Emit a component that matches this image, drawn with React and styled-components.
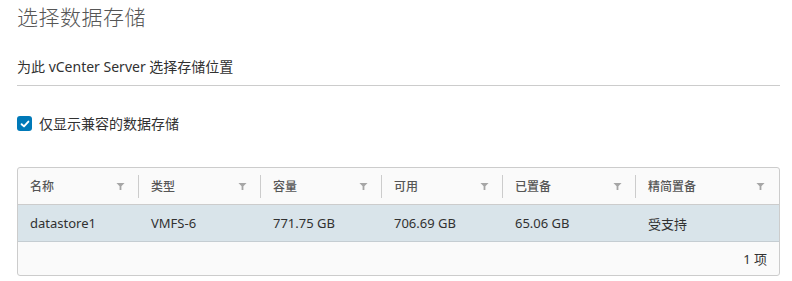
import React from "react";
import styled, { createGlobalStyle } from "styled-components";

const GlobalStyle = createGlobalStyle`
  html, body {
    margin: 0;
    padding: 0;
    background: #ffffff;
  }
  body {
    font-family: "Noto Sans", "Noto Sans CJK SC", sans-serif;
    color: #565656;
  }
`;

const columns = [
  { key: "name", label: "名称", width: 121 },
  { key: "type", label: "类型", width: 122 },
  { key: "capacity", label: "容量", width: 121 },
  { key: "free", label: "可用", width: 121 },
  { key: "provisioned", label: "已置备", width: 133 },
  { key: "thin", label: "精简置备" },
];

const rows = [
  {
    name: "datastore1",
    type: "VMFS-6",
    capacity: "771.75 GB",
    free: "706.69 GB",
    provisioned: "65.06 GB",
    thin: "受支持",
  },
];

function FilterIcon() {
  return (
    <svg width="9" height="9" viewBox="0 0 10 10">
      <path d="M0.5 1 H9.5 L6 4.8 V9 H4 V4.8 Z" fill="#a6a6a6" />
    </svg>
  );
}

function CheckIcon() {
  return (
    <svg width="10" height="10" viewBox="0 0 10 10">
      <path
        d="M1.6 5.2 L4 7.4 L8.4 2.6"
        fill="none"
        stroke="#ffffff"
        strokeWidth="1.9"
        strokeLinecap="round"
        strokeLinejoin="round"
      />
    </svg>
  );
}

export default function App() {
  return (
    <Page>
      <GlobalStyle />
      <Title>选择数据存储</Title>
      <Subtitle>为此 vCenter Server 选择存储位置</Subtitle>
      <Divider />
      <CheckRow>
        <CheckBox>
          <CheckIcon />
        </CheckBox>
        <CheckLabel>仅显示兼容的数据存储</CheckLabel>
      </CheckRow>
      <Grid>
        <HeaderRow>
          {columns.map((col, i) => (
            <HeaderCell key={col.key} $width={col.width}>
              <HeaderLabel>{col.label}</HeaderLabel>
              <FilterIcon />
              {i < columns.length - 1 && <Separator />}
            </HeaderCell>
          ))}
        </HeaderRow>
        {rows.map((row) => (
          <DataRow key={row.name} $selected>
            {columns.map((col) => (
              <DataCell key={col.key} $width={col.width}>
                {row[col.key]}
              </DataCell>
            ))}
          </DataRow>
        ))}
        <Footer>1 项</Footer>
      </Grid>
    </Page>
  );
}

const Page = styled.div`
  padding: 0 12px 0 17px;
  width: 763px;
`;

const Title = styled.h2`
  margin: 0;
  padding-top: 2px;
  font-size: 21px;
  line-height: 30px;
  font-weight: 300;
  color: #565656;
  letter-spacing: 0.5px;
`;

const Subtitle = styled.p`
  margin: 25px 0 0;
  font-size: 14px;
  line-height: 19px;
  color: #313131;
`;

const Divider = styled.hr`
  margin: 9px 0 0;
  border: none;
  border-top: 1px solid #cccccc;
`;

const CheckRow = styled.div`
  display: flex;
  align-items: center;
  gap: 7px;
  margin-top: 28px;
`;

const CheckBox = styled.span`
  display: flex;
  align-items: center;
  justify-content: center;
  width: 15px;
  height: 15px;
  border-radius: 3px;
  background: #0079b8;
`;

const CheckLabel = styled.span`
  font-size: 14px;
  line-height: 19px;
  color: #313131;
`;

const Grid = styled.div`
  margin-top: 34px;
  border: 1px solid #cccccc;
  border-radius: 3px;
  background: #fafafa;
  overflow: hidden;
`;

const HeaderRow = styled.div`
  display: flex;
  height: 36px;
  border-bottom: 1px solid #cccccc;
`;

const HeaderCell = styled.div`
  position: relative;
  box-sizing: border-box;
  display: flex;
  align-items: center;
  justify-content: space-between;
  padding: 0 14px 0 12px;
  flex: ${(p) => (p.$width ? `0 0 ${p.$width}px` : "1 1 auto")};
`;

const HeaderLabel = styled.span`
  font-size: 12px;
  font-weight: 500;
  color: #565656;
`;

const Separator = styled.span`
  position: absolute;
  right: 0;
  top: 7px;
  bottom: 6px;
  width: 1px;
  background: #cccccc;
`;

const DataRow = styled.div`
  display: flex;
  height: 36px;
  align-items: center;
  background: ${(p) => (p.$selected ? "#d9e4ea" : "#ffffff")};
  border-bottom: 1px solid #c5cdd2;
`;

const DataCell = styled.div`
  box-sizing: border-box;
  padding: 0 12px;
  font-size: 13px;
  color: #313131;
  flex: ${(p) => (p.$width ? `0 0 ${p.$width}px` : "1 1 auto")};
`;

const Footer = styled.div`
  height: 33px;
  display: flex;
  align-items: center;
  justify-content: flex-end;
  padding-right: 12px;
  font-size: 13px;
  color: #313131;
`;
